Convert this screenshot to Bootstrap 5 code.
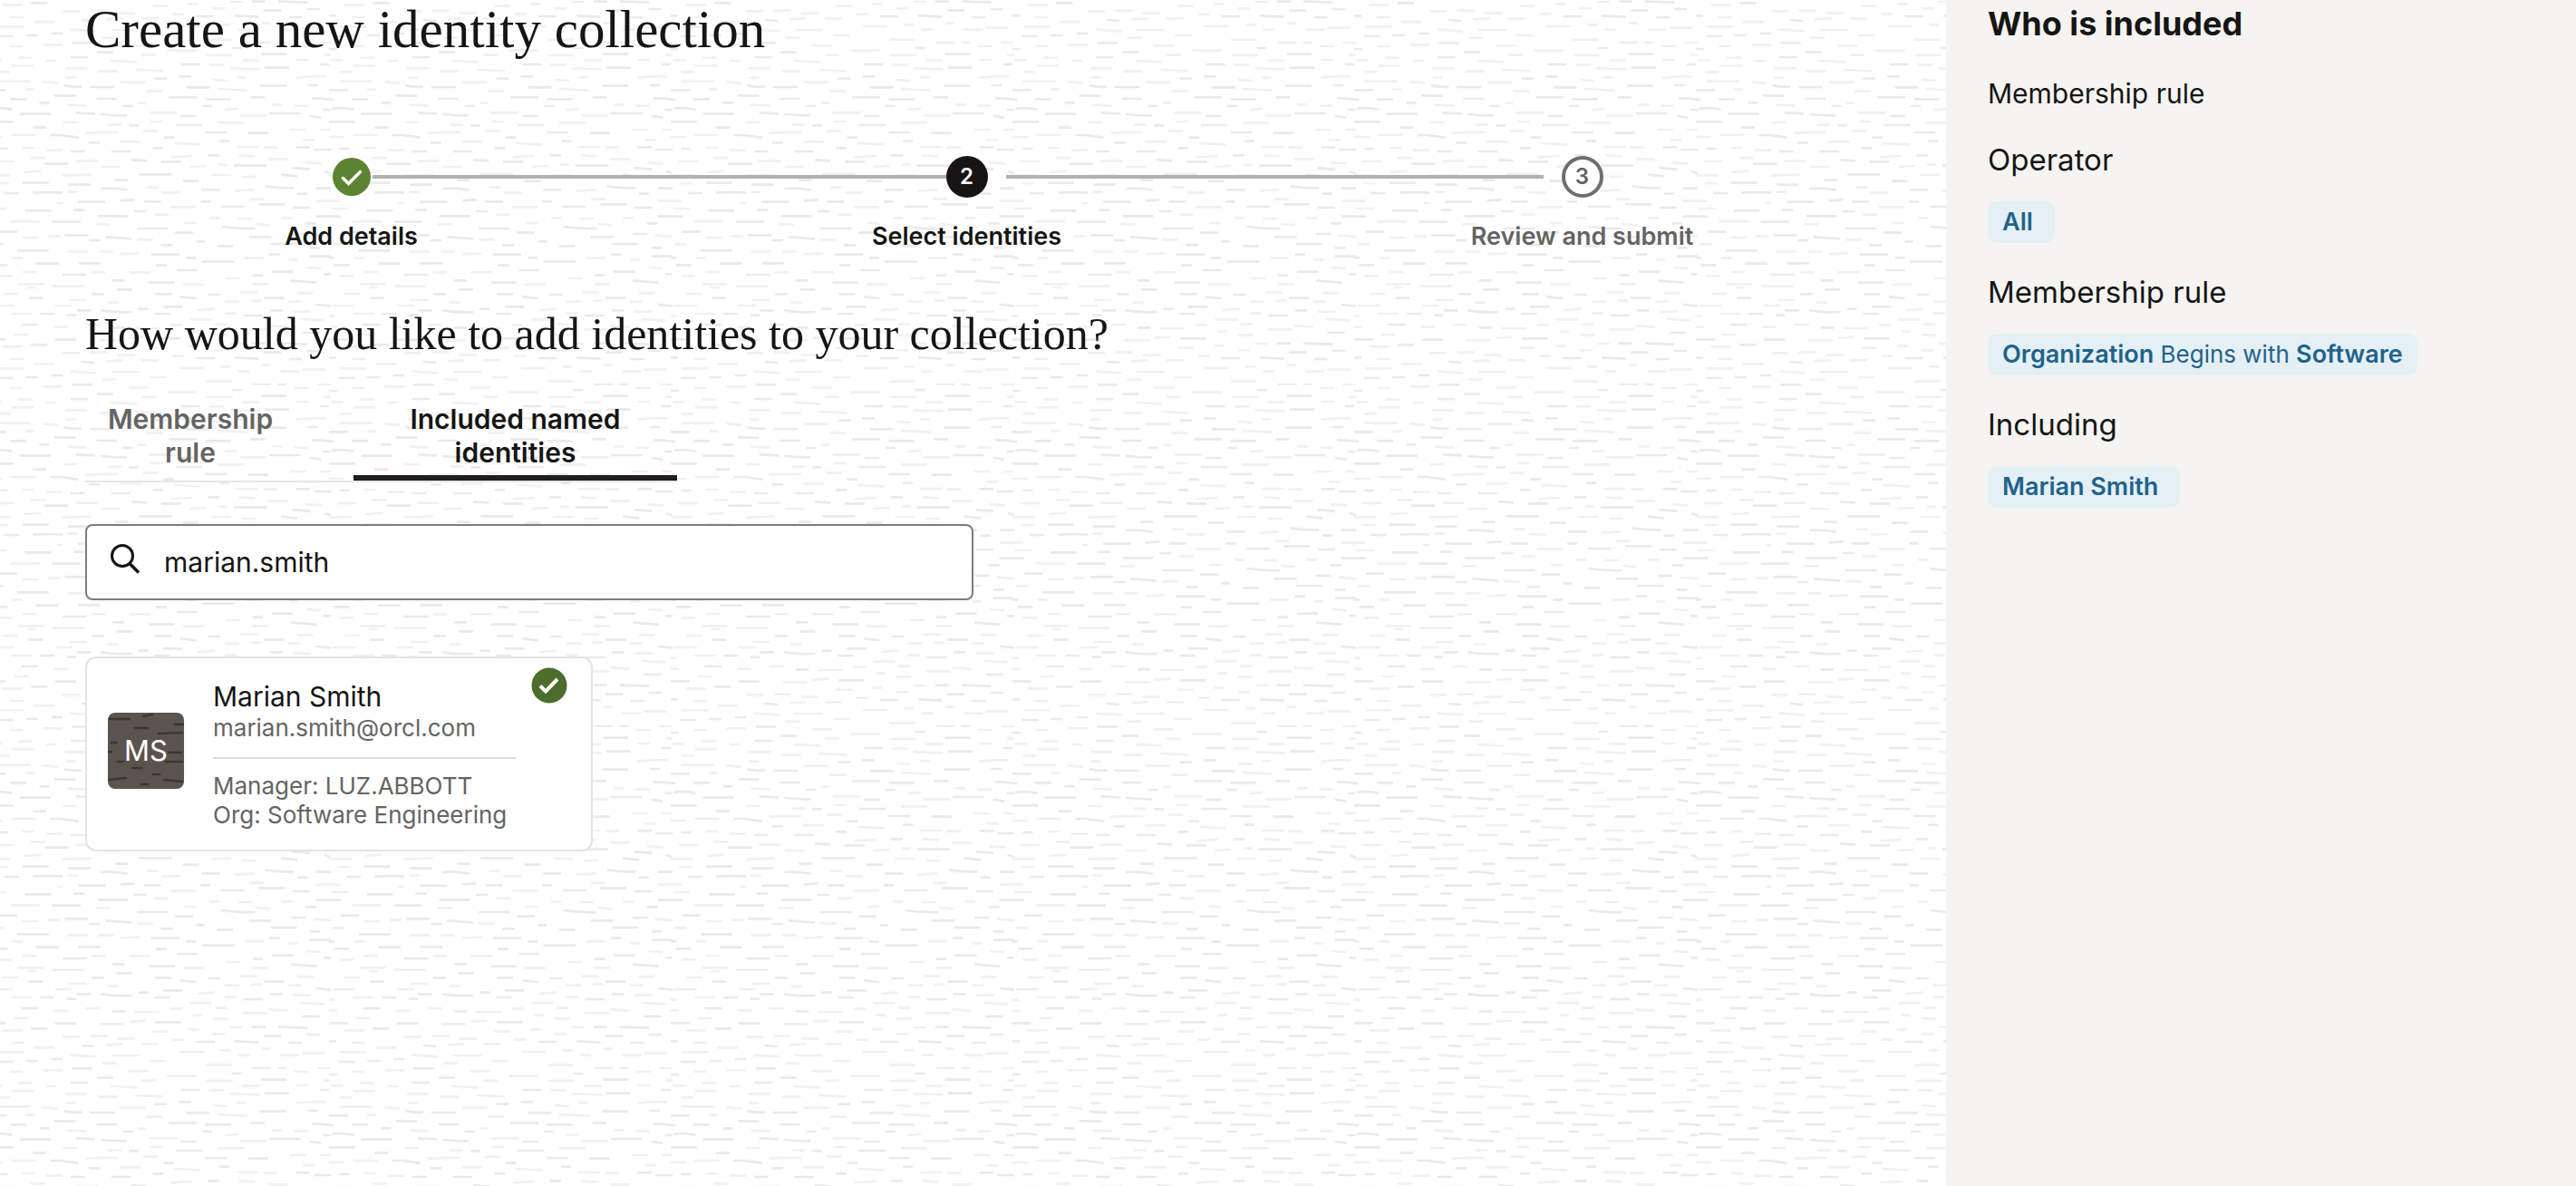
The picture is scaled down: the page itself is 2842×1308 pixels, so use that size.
<!DOCTYPE html>
<html lang="en">
<head>
<meta charset="utf-8">
<meta name="viewport" content="width=device-width, initial-scale=1">
<title>Create a new identity collection</title>
<link href="https://cdn.jsdelivr.net/npm/bootstrap@5.3.0/dist/css/bootstrap.min.css" rel="stylesheet">
<style>
  body { font-family: Inter, "Liberation Sans", sans-serif; color: #161513; background-color: #fff; }
  .serif-title { font-family: Georgia, "Liberation Serif", serif; font-weight: 400; margin: 0; }
  h1.serif-title { font-size: 59px; line-height: 64px; }
  h2.serif-title { font-size: 50px; line-height: 56px; margin-top: 62px; }

  .main-pane {
    padding: 0 62px 48px 94px; min-width: 0;
    background: 69px 46px / 377px 377px url("data:image/svg+xml,%3Csvg xmlns='http://www.w3.org/2000/svg' viewBox='0 0 1131 1131'%3E%3Cg fill='none' stroke-linecap='round' stroke-width='8'%3E%3Cpath stroke='%23eaeaea' d='M35 4h60M118 35h46M563 21h26M632 1h55M716 1h22M885 24h20M30 51h52M662 41h76M395 75h56M855 75h24M672 86h74M388 115h34M308 122h34M8 145q25 6 52 4M93 150h75M414 151h70M658 146h80M815 144h28M885 160h56M0 179h40M116 189h60M355 184h86M476 190h78M626 184h40M828 187q33 1 66 5M960 190h48M1107 178h24M203 213h26M465 213h26M1058 202h26M866 225h18M895 221q33-4 66 3M48 235q25 2 56 3M130 240q40 5 80 4M395 246h44M688 237h96M822 246l30 5M992 239h96M223 277h26M378 276h80M885 265h80M1036 284h38M476 300h64M617 302h60M1094 309h37M0 310l50 7M338 317h28M90 334h30M523 329h26M302 352h28M776 349h40M835 357h50M920 354h26M30 363h40M165 363h56M484 376h32M232 391l44 3M330 397h60M1075 404h57M0 404h16M570 410h102M764 418l52 4M870 430l14 5M256 439h102M726 440l48 5M178 458h36M402 461h46M22 473h66M1002 467h80M130 486q40-3 82 4M674 479q40 6 88 5M463 490h54M843 485h42M780 503h26M942 501h42M1036 500q50-4 94 0M55 530h84M195 526l40-3M272 529h50M460 529h26M652 538h80M40 557h30M240 561h34M528 546h70M765 549h50M1010 559h80M120 577h94M842 578h76M1100 596h32M0 596h56M806 601h30M250 618h96M530 612q50 8 104 6M376 632h52M760 636h42M925 629h52M10 640h72M145 646l80 6M620 646h68M90 657h30M446 661h22M328 673h34M516 676h46M692 669h80M822 682h28M296 704h88M984 691h98M688 704h28M822 710h62M412 715h26M885 715h12M56 733h66M464 728h100M312 740h30M902 739h44M1047 734h68M383 756h58M0 771h76M696 761h64M868 769h16M632 773h28M168 790h34M290 797h78M760 791l78 6M182 820h44M100 835h34M310 835h48M485 837h34M393 844l46 5M670 848h60M1022 848h40M336 877h58M843 870l42 4M254 884h26M50 889h40M130 889q40 7 96 5M690 889h34M18 905h24M308 900h44M602 906h58M1060 900h40M998 936h50M168 946h36M797 963h50M0 986h42M310 982h78M885 985h56M1110 986h22M630 998h38M718 998l90 3M1030 1003h48M812 1023h36M670 1028h50M446 1047h54M574 1045l72 4M885 1045h18M752 1050h38M66 1059l36 3M1012 1110h34M918 1113h46M1098 1104h34'/%3E%3Cpath stroke='%23f1f1f1' d='M222 13h60M265 44h40M350 29h90M770 15h42M848 3h36M962 15h34M1070 10h58M162 63l80 4M480 45h80M868 44h16M598 62h50M775 60h34M892 61h34M988 53h40M1080 63h28M12 88h66M488 76h44M966 79h66M122 98h56M245 93l84 4M557 88l92 3M920 100h34M14 119h26M580 118h24M775 119q46-5 92-4M502 126l40 3M195 134h76M920 131h102M1070 133l42 4M280 164h48M516 156l92 5M1012 158h22M20 209l56 3M253 203h20M696 208h28M770 212h38M540 225l36-3M290 235h86M590 244h82M5 267h40M155 275h36M295 264h32M516 268h80M80 302q50-3 100-2M270 296h42M757 291h46M856 291h28M885 315h44M965 309h74M192 331h64M373 336l80 4M800 325h32M580 348h66M668 350h40M1002 351h32M1080 359h52M363 382l64-4M588 376l46 3M685 388h58M1028 385h42M46 395h66M808 400l46 3M912 396h56M132 414h56M425 414l46-3M520 407h22M1006 432l50-4M0 443l92-3M497 441h58M598 447h40M885 442h68M915 468h34M283 482h32M572 494l58-4M20 497h26M332 499h52M622 521h40M843 527h72M1115 534h20M360 547h78M893 552h50M307 572h40M490 583h26M584 585h40M728 583h28M962 595h90M112 604h42M405 600h32M643 603l40 4M834 641l50 4M1002 648h46M1086 644h32M250 655h46M897 670h34M20 694h60M124 694h40M195 703l56-3M606 715h56M968 715h28M752 721h24M812 747l40 3M98 763h40M224 763h64M1002 762h38M920 775h40M545 783h40M0 809h70M1102 809h30M402 803h62M632 802h46M988 802h78M1018 813h22M592 830h50M780 832h46M937 834h44M24 855h52M152 863h30M540 860h42M627 857h28M750 860h36M0 873h28M897 873h68M1110 873h22M450 888l50-4M766 893h52M540 899h32M885 908h14M965 900h60M425 919h66M790 918l72 4M80 936h42M360 937h32M508 935h32M0 944h14M242 948h76M598 952h76M686 940l56 4M885 944h20M1106 944h26M434 959h24M500 970h44M974 969h40M225 980l46-3M126 988h74M558 999h34M420 1006h28M935 1009h60M302 1013h44M500 1021h34M95 1028h50M4 1030h50M185 1037h52M368 1040h32M960 1050h38M148 1057l48-3M264 1054h50M1040 1066h62M390 1080h74M526 1075h26M663 1070h22M796 1085h70M922 1081h80M30 1091l78 5M165 1092h86M584 1091h32M725 1091h56M292 1110h48M134 1118h40M478 1124h78'/%3E%3C/g%3E%3C/svg%3E");
  }

  /* Progress train */
  .train { margin: 108px 0 0 -46px; }
  .train-step { flex: 1 1 0; font-size: 27px; line-height: 34px; font-weight: 600; }
  .train-row { height: 46px; margin-bottom: 26px; }
  .train-line { width: calc(50% - 23px); height: 4px; background-clip: content-box; }
  .train-line.drawn { background-color: #b1b1b0; }
  .train-dot { width: 46px; height: 46px; border-radius: 50%; font-size: 24px; flex: none; }
  .train-dot.current { background: #161513; color: #fff; }
  .train-dot.todo { border: 4px solid #6f6e6c; background: #fff; color: #656462; }
  .soft { color: #656462; }
  .before-gap { padding-right: 20px; }
  .after-gap { padding-left: 20px; }

  .tab-strip { margin-top: 48px; width: 653px; gap: 64px; border-bottom: 2px solid #e6e6e5; }
  .tab-strip .nav-link { font-size: 30px; line-height: 37px; font-weight: 600; padding: 0 24px 6px; border-bottom: 6px solid transparent; color: #656462; text-align: center; }
  .tab-strip .nav-item:first-child { flex: 0 0 232px; }
  .tab-strip .nav-item:last-child { flex: 1 1 0; }
  .tab-strip .nav-item:last-child .nav-link { padding-left: 56px; padding-right: 56px; }
  .tab-strip .nav-link.active { color: #161513; border-color: #201e1c; }

  .search-box { width: 980px; max-width: 100%; height: 84px; margin-top: 46px; border: 2px solid #7d7c7a; border-radius: 8px; background: #fff; padding: 0 25px; gap: 26px; }
  .search-box svg { width: 34px; height: 34px; margin-bottom: 8px; flex: none; }
  .search-box input { font-size: 30px; line-height: 38px; color: #161513; box-shadow: none; background: none; outline: 0; }

  .person { width: 560px; max-width: 100%; margin-top: 62px; border: 2px solid #e4e4e3; border-radius: 12px; background: #fff; padding: 23px 23px 22px; }
  .person-name { font-size: 30px; line-height: 38px; }
  .person-meta { font-size: 26px; line-height: 32px; color: #656462; }
  .person-info { width: 334px; margin-left: 32px; }
  .person-info hr { margin: 16px 0 14px; border-top: 2px solid #dcdcdb; opacity: 1; }
  .avatar { width: 84px; height: 84px; margin-top: 37px; border-radius: 8px; background: #5b544e; overflow: hidden; flex: none; display: grid; place-items: center; color: #fff; font-size: 31px; }
  .avatar > * { grid-area: 1 / 1; }
  .picked { width: 40px; height: 40px; top: 10px; right: 26px; }

  .side-pane { flex: 0 0 695px; background: #f5f4f2; padding: 0 46px; }
  .side-pane h2 { font-size: 36px; line-height: 46px; font-weight: 700; margin: 3px 0 0; }
  .side-pane h3 { font-size: 33px; line-height: 42px; font-weight: 400; margin: 33px 0 0; }
  .side-pane p { font-size: 30px; line-height: 38px; margin: 35px 0 0; }
  .chip { display: table; margin-top: 25px; background: #e5f0f5; color: #1e638c; border-radius: 10px; padding: 6px 16px; font-size: 26px; line-height: 34px; }
  .chip b { font-size: 27px; font-weight: 600; }
  .chip-room { padding-right: 24px; }
</style>
</head>
<body>
<div class="d-flex min-vh-100">
  <main class="main-pane flex-grow-1">
    <h1 class="serif-title">Create a new identity collection</h1>

    <ol class="train list-unstyled d-flex text-center">
      <li class="train-step">
        <div class="train-row d-flex align-items-center">
          <span class="train-line"></span>
          <svg class="train-dot" viewBox="0 0 46 46" role="img" aria-label="Done"><circle cx="23" cy="23" r="21" fill="#5b8330"/><path d="M13.500 24.500l6 6L32.500 17.500" fill="none" stroke="#fff" stroke-width="3.500" stroke-linecap="round"/></svg>
          <span class="train-line drawn"></span>
        </div>
        Add details
      </li>
      <li class="train-step">
        <div class="train-row d-flex align-items-center">
          <span class="train-line drawn"></span>
          <span class="train-dot current d-flex align-items-center justify-content-center">2</span>
          <span class="train-line drawn after-gap"></span>
        </div>
        Select identities
      </li>
      <li class="train-step soft">
        <div class="train-row d-flex align-items-center">
          <span class="train-line drawn before-gap"></span>
          <span class="train-dot todo d-flex align-items-center justify-content-center">3</span>
          <span class="train-line"></span>
        </div>
        Review and submit
      </li>
    </ol>

    <h2 class="serif-title">How would you like to add identities to your collection?</h2>

    <ul class="nav flex-nowrap tab-strip">
      <li class="nav-item"><a class="nav-link" href="#rule">Membership rule</a></li>
      <li class="nav-item"><a class="nav-link active" aria-current="page" href="#named">Included named identities</a></li>
    </ul>

    <div class="search-box d-flex align-items-center">
      <svg viewBox="0 0 34 34" aria-hidden="true"><circle cx="14" cy="14" r="11.500" fill="none" stroke="#161513" stroke-width="3"/><path d="M22 22.500L32 32.500" stroke="#161513" stroke-width="3.500"/></svg>
      <input class="form-control border-0 p-0" type="text" value="marian.smith" aria-label="Search identities">
    </div>

    <article class="person position-relative d-flex align-items-start">
      <div class="avatar">
        <svg width="84" height="84" viewBox="0 0 84 84" fill="none" stroke="#3b3632" stroke-width="2.500" stroke-linecap="round" aria-hidden="true"><path d="M2 7h22M39 4l10-2M30 17h14M74 13h10M56 23l26-1M4 33h6M0 43h4M67 44h14M11 54h6M64 54h18M27 61h10M50 68h7M1 74q9-1 19-2M62 74q10 1 20 2M37 79h7"/></svg>
        <span>MS</span>
      </div>
      <div class="person-info">
        <div class="person-name">Marian Smith</div>
        <div class="person-meta">marian.smith@orcl.com</div>
        <hr>
        <div class="person-meta">Manager: LUZ.ABBOTT</div>
        <div class="person-meta">Org: Software Engineering</div>
      </div>
      <svg class="picked position-absolute" viewBox="0 0 40 40" role="img" aria-label="Selected"><circle cx="20" cy="20" r="19.500" fill="#4c6d2b"/><path d="M10 20.500l6 6L29 13" fill="none" stroke="#fff" stroke-width="4"/></svg>
    </article>
  </main>

  <aside class="side-pane">
    <h2>Who is included</h2>
    <p>Membership rule</p>
    <h3>Operator</h3>
    <div class="chip chip-room"><b>All</b></div>
    <h3>Membership rule</h3>
    <div class="chip"><b>Organization</b> Begins with <b>Software</b></div>
    <h3>Including</h3>
    <div class="chip chip-room"><b>Marian Smith</b></div>
  </aside>
</div>
<script src="https://cdn.jsdelivr.net/npm/bootstrap@5.3.0/dist/js/bootstrap.bundle.min.js"></script>
</body>
</html>
